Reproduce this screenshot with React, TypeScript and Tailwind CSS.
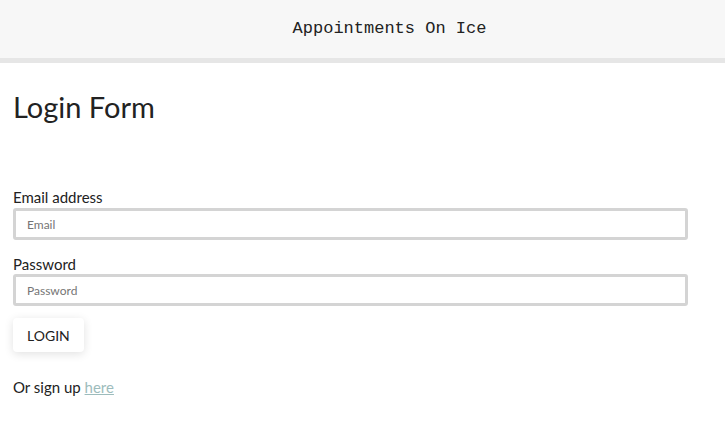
export default function App() {
  return (
    <div className="min-h-screen bg-white font-['Lato','Noto_Sans',sans-serif] text-[#222]">
      <header className="flex h-[63px] items-center justify-center border-b-[5px] border-[#e6e6e6] bg-[#f7f7f7] pl-[54px]">
        <span className="font-['Liberation_Mono',monospace] text-[17px] text-[#222]">Appointments On Ice</span>
      </header>

      <main className="px-[13px]">
        <h1 className="mt-[27px] text-[29px] leading-[34px] text-[#222]">Login Form</h1>

        <form className="mt-[63px] flex w-[675px] flex-col" onSubmit={(e) => e.preventDefault()}>
          <label className="flex flex-col">
            <span className="text-[15px] leading-[20px]">Email address</span>
            <input
              type="email"
              placeholder="Email"
              className="mt-[1px] h-[32px] rounded-[3px] border-[3px] border-[#d4d4d4] px-[11px] text-[12px] placeholder:text-[#757575] outline-none"
            />
          </label>

          <label className="mt-[14px] flex flex-col">
            <span className="text-[15px] leading-[20px]">Password</span>
            <input
              type="password"
              placeholder="Password"
              className="h-[32px] rounded-[3px] border-[3px] border-[#d4d4d4] px-[11px] text-[12px] placeholder:text-[#757575] outline-none"
            />
          </label>

          <div>
            <button
              type="submit"
              className="mt-[12px] h-[34px] rounded-[4px] bg-white px-[14px] text-[14px] text-[#222] shadow-[0_2px_10px_rgba(0,0,0,0.12)]"
            >
              LOGIN
            </button>
          </div>
        </form>

        <p className="mt-[24px] text-[15px]">
          Or sign up{' '}
          <a href="#" className="text-[#9dbcbc] underline">
            here
          </a>
        </p>
      </main>
    </div>
  )
}
